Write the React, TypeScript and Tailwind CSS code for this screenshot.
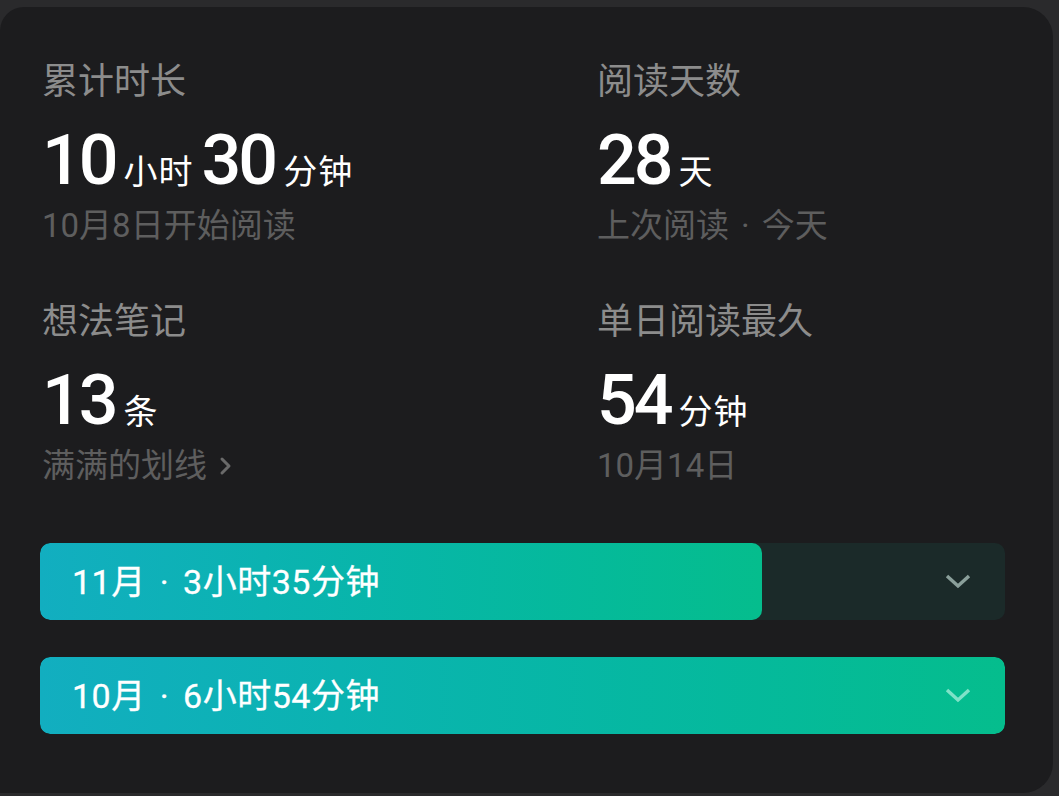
const font = { fontFamily: '"Roboto", "Noto Sans CJK SC", sans-serif' };

function Stat({
  label,
  parts,
  sub,
  arrow,
}: {
  label: React.ReactNode;
  parts: [string, string][];
  sub: React.ReactNode;
  arrow?: boolean;
}) {
  return (
    <div>
      <div className="text-[36px] leading-none text-[#8c8c8c]">{label}</div>
      <div className="mt-[25px] flex items-baseline text-white">
        {parts.map(([num, unit], i) => (
          <div key={i} className="flex items-baseline">
            <span className="text-[70px] leading-none font-medium tracking-[-3px]">{num}</span>
            <span className="ml-[8px] mr-[8px] text-[34px] leading-none tracking-[1px]">{unit}</span>
          </div>
        ))}
      </div>
      <div className="mt-[14px] flex items-center text-[33px] leading-none text-[#5e5e5e]">
        {sub}
        {arrow && (
          <svg width="14" height="20" viewBox="0 0 14 20" className="ml-[12px]" fill="none">
            <path d="M3 3l7 7-7 7" stroke="#6a6a6a" strokeWidth="3" strokeLinecap="round" strokeLinejoin="round" />
          </svg>
        )}
      </div>
    </div>
  );
}

function MonthBar({ month, time, pct, chevron }: { month: string; time: string; pct: number; chevron: string }) {
  return (
    <div className="relative h-[77px] rounded-[10px] bg-[#1b2a29] overflow-hidden">
      <div
        className="absolute inset-y-0 left-0 rounded-[10px] bg-gradient-to-r from-[#12aec0] to-[#05bd8d]"
        style={{ width: `${pct}%` }}
      />
      <div className="relative flex h-full items-center justify-between pl-[32px] pr-[34px]">
        <span className="flex items-center text-[34px] leading-none text-white tracking-[0.5px] [-webkit-text-stroke:0.3px_white]">
          <span>{month}</span>
          <span className="mx-[14px]">·</span>
          <span>{time}</span>
        </span>
        <svg width="26" height="15" viewBox="0 0 26 15" fill="none">
          <path d="M2 2l11 10L24 2" stroke={chevron} strokeWidth="3.5" />
        </svg>
      </div>
    </div>
  );
}

export default function App() {
  return (
    <main className="min-h-screen bg-[#2a2a2c] pt-[7px] pr-[6px]" style={font}>
      <div className="h-[786px] rounded-tr-[30px] rounded-br-[30px] rounded-tl-[24px] bg-[#1c1c1e] pl-[42px] pr-[48px] pt-[57px]">
        <div className="grid grid-cols-[555px_1fr] gap-y-[62px]">
          <Stat label="累计时长" parts={[["10", "小时"], ["30", "分钟"]]} sub="10月8日开始阅读" />
          <Stat
            label="阅读天数"
            parts={[["28", "天"]]}
            sub={
              <>
                上次阅读<span className="mx-[12px]">·</span>今天
              </>
            }
          />
          <Stat label="想法笔记" parts={[["13", "条"]]} sub="满满的划线" arrow />
          <Stat label="单日阅读最久" parts={[["54", "分钟"]]} sub="10月14日" />
        </div>
        <div className="-ml-[2px] mt-[61px] flex flex-col gap-[37px]">
          <MonthBar month="11月" time="3小时35分钟" pct={74.8} chevron="#8a9f9a" />
          <MonthBar month="10月" time="6小时54分钟" pct={100} chevron="#7fe2c8" />
        </div>
      </div>
    </main>
  );
}
